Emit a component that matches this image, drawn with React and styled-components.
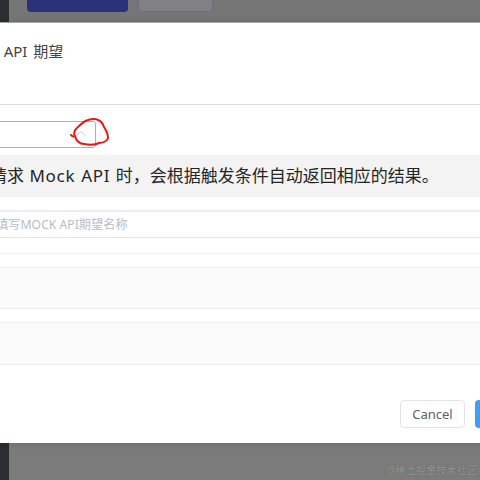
import React from "react";
import styled, { createGlobalStyle } from "styled-components";

const Global = createGlobalStyle`
  html, body { margin: 0; padding: 0; background: #787878; }
  * { box-sizing: border-box; }
`;

const FONT = `"Noto Sans", "Noto Sans CJK SC", sans-serif`;

const Page = styled.div`
  position: relative;
  width: 480px;
  height: 480px;
  overflow: hidden;
  display: flex;
  background: linear-gradient(180deg, #757575 0%, #7b7b7b 100%);
  font-family: ${FONT};
`;
const Sidebar = styled.div`
  width: 9px;
  flex: none;
  background: #2a2d32;
`;
const Toolbar = styled.div`
  display: flex;
  gap: 10px;
  padding-left: 18px;
  height: 12px;
`;
const ToolButton = styled.div`
  width: ${(p) => p.$w}px;
  height: 12px;
  border-radius: 0 0 4px 4px;
  background: ${(p) => p.$bg};
  border: 1px solid ${(p) => p.$line};
  border-top: 0;
`;
const Watermark = styled.div`
  position: absolute;
  right: 3px;
  bottom: 3px;
  font-size: 10px;
  line-height: 14px;
  color: #979797;
  letter-spacing: 0.15px;
  text-shadow: 0 0 1px #555;
`;
const Modal = styled.div`
  position: absolute;
  top: 23px;
  left: -200px;
  width: 760px;
  height: 420px;
  background: #fff;
  display: flex;
  flex-direction: column;
  box-shadow: 0 -1px 0 #a8a8a8, 0 0 6px rgba(0, 0, 0, 0.15);
`;
const Header = styled.div`
  height: 82px;
  flex: none;
  border-bottom: 1px solid #dcdcdc;
  padding: 16px 0 0 124px;
  font-size: 15px;
  line-height: 24px;
  color: #444;
  word-spacing: 2px;
`;
const SelectRow = styled.div`
  height: 50px;
  flex: none;
  padding-top: 16px;
  padding-left: 100px;
`;
const SelectBox = styled.div`
  position: relative;
  width: 196px;
  height: 27px;
  border: 1px solid #7fb8f5;
  border-radius: 3px;
  display: flex;
  align-items: center;
  justify-content: flex-end;
  padding: 0 9px 2px 0;
`;
const Scribble = styled.svg`
  position: absolute;
  left: 169px;
  top: -4px;
  overflow: visible;
`;
const Banner = styled.div`
  height: 42px;
  flex: none;
  background: #f3f3f3;
  padding-left: 173px;
  font-size: 17px;
  line-height: 42px;
  color: #262626;
  white-space: nowrap;
`;
const Latin = styled.span`
  letter-spacing: 0.7px;
  word-spacing: 1px;
  margin: 0 1px;
`;
const InputRow = styled.div`
  margin-top: 13px;
  height: 28px;
  flex: none;
  border-top: 2px solid #ececf2;
  border-bottom: 1px solid #e6e6e6;
  padding-left: 184px;
  font-size: 12.2px;
  line-height: 26px;
  color: #b9bcc4;
  white-space: nowrap;
`;
const ThinLine = styled.div`
  margin-top: 15px;
  height: 1px;
  flex: none;
  background: #f0f0f0;
`;
const Section = styled.div`
  margin-top: ${(p) => p.$top}px;
  height: ${(p) => p.$h}px;
  flex: none;
  background: #fbfbfb;
  border-top: 1px solid #f1f1f1;
  border-bottom: 1px solid #ececec;
`;
const Footer = styled.div`
  margin-top: 35px;
  display: flex;
  justify-content: flex-end;
  gap: 10px;
`;
const CancelButton = styled.div`
  width: 65px;
  height: 28px;
  border: 1px solid #e2e4e8;
  border-radius: 4px;
  background: #fff;
  color: #5c5f66;
  font-size: 13px;
  line-height: 26px;
  text-align: center;
`;
const PrimaryButton = styled.div`
  width: 85px;
  height: 28px;
  border-radius: 4px;
  background: #3f9dfb;
`;

export default function App() {
  return (
    <Page>
      <Global />
      <Sidebar />
      <Toolbar>
        <ToolButton $w={101} $bg="#2c3278" $line="#2b3180" />
        <ToolButton $w={75} $bg="#808085" $line="#6c6c88" />
      </Toolbar>
      <Watermark>@稀土掘金技术社区</Watermark>
      <Modal>
        <Header>新建 Mock API 期望</Header>
        <SelectRow>
          <SelectBox>
            <svg width="10" height="5" viewBox="0 0 10 5" fill="none">
              <path d="M0.5 4.8 L5 0.5 L9.5 4.8" stroke="#c4c6cc" strokeWidth="1" />
            </svg>
            <Scribble width="40" height="30" viewBox="0 0 40 30" fill="none">
              <path
                d="M1 17 C2 18 4 19 5 18 C3 15 5 11 8 9 C11 6 14 3 18 2 C21 1 25 0 28 2 C31 3 33 6 34 9 C36 12 38 16 38 20 C37 23 33 25 29 25 C25 27 19 27 14 26 C10 26 6 23 5 18"
                stroke="#f01414"
                strokeWidth="2"
                strokeLinecap="round"
                strokeLinejoin="round"
              />
            </Scribble>
          </SelectBox>
        </SelectRow>
        <Banner>当请求 <Latin>Mock API</Latin> 时，会根据触发条件自动返回相应的结果。</Banner>
        <InputRow>请填写MOCK API期望名称</InputRow>
        <ThinLine />
        <Section $top={13} $h={42} />
        <Section $top={13} $h={43} />
        <Footer>
          <CancelButton>Cancel</CancelButton>
          <PrimaryButton />
        </Footer>
      </Modal>
    </Page>
  );
}
